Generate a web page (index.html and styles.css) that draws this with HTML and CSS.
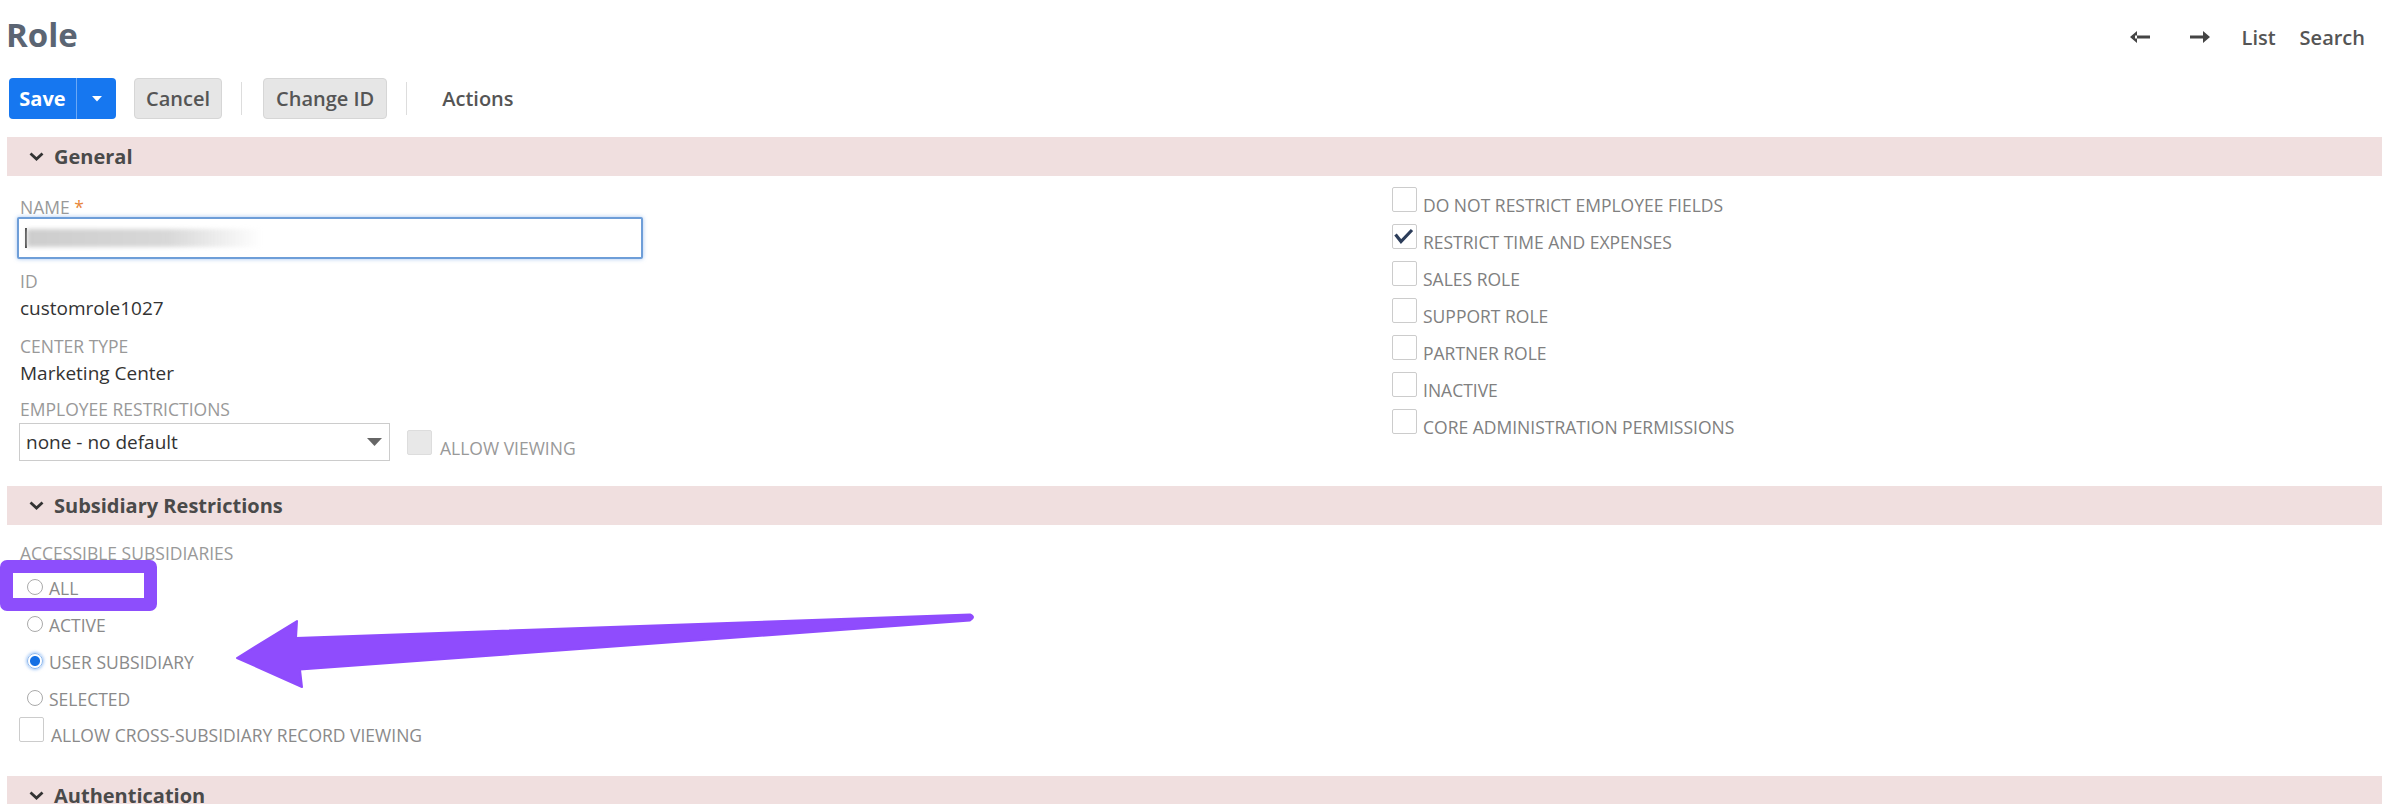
FILE: index.html
```html
<!DOCTYPE html>
<html lang="en">
<head>
    <meta charset="UTF-8">
    <title>Role</title>
    <link rel="stylesheet" href="styles.css">
</head>
<body>
    <header class="top">
        <h1 class="title">Role</h1>
        <nav class="nav">
            <span class="nav-arrow">
                <svg width="22" height="14" viewBox="0 0 22 14"><path d="M8 1 L1 7 L8 13 Z M6 5.5 H21 V8.5 H6 Z" fill="#444"/></svg>
            </span>
            <span class="nav-arrow">
                <svg width="22" height="14" viewBox="0 0 22 14"><path d="M14 1 L21 7 L14 13 Z M1 5.5 H16 V8.5 H1 Z" fill="#444"/></svg>
            </span>
            <span>List</span>
            <span>Search</span>
        </nav>
    </header>

    <div class="toolbar">
        <div class="save-group">
            <button class="btn btn-save">Save</button>
            <button class="btn btn-caret">
                <svg width="10" height="6" viewBox="0 0 10 6"><polygon points="0,0 10,0 5,5.5" fill="#fff"/></svg>
            </button>
        </div>
        <button class="btn btn-grey btn-cancel">Cancel</button>
        <span class="sep"></span>
        <button class="btn btn-grey">Change ID</button>
        <span class="sep"></span>
        <span class="actions">Actions</span>
    </div>

    <section class="section section-general">
        <div class="section-head">
            <svg width="15" height="9" viewBox="0 0 15 9"><path d="M1.5 1.5 L7.5 7 L13.5 1.5" fill="none" stroke="#333" stroke-width="2.8"/></svg>
            General
        </div>
        <div class="general-body">
            <div class="col-left">
                <div class="field">
                    <div class="label">Name <span class="req">*</span></div>
                    <div class="text-input">
                        <span class="cursor"></span>
                        <span class="redacted"></span>
                    </div>
                </div>
                <div class="field field-id">
                    <div class="label">ID</div>
                    <div class="value">customrole1027</div>
                </div>
                <div class="field field-center">
                    <div class="label">Center Type</div>
                    <div class="value">Marketing Center</div>
                </div>
                <div class="field field-emp">
                    <div class="label">Employee Restrictions</div>
                    <div class="select-row">
                        <div class="select">
                            <span>none - no default</span>
                            <svg width="15" height="8" viewBox="0 0 15 8"><polygon points="0,0 15,0 7.5,8" fill="#666"/></svg>
                        </div>
                        <div class="check-row allow-viewing">
                            <span class="cb cb-disabled"></span>
                            <span class="check-text">ALLOW VIEWING</span>
                        </div>
                    </div>
                </div>
            </div>
            <div class="col-right">
                <div class="check-row"><span class="cb"></span><span class="check-text">DO NOT RESTRICT EMPLOYEE FIELDS</span></div>
                <div class="check-row">
                    <span class="cb">
                        <svg width="23" height="23" viewBox="0 0 23 23"><path d="M2.5 9.5 L8 16.5 L19 5" fill="none" stroke="#2c3d5a" stroke-width="3.2"/></svg>
                    </span>
                    <span class="check-text">RESTRICT TIME AND EXPENSES</span>
                </div>
                <div class="check-row"><span class="cb"></span><span class="check-text">SALES ROLE</span></div>
                <div class="check-row"><span class="cb"></span><span class="check-text">SUPPORT ROLE</span></div>
                <div class="check-row"><span class="cb"></span><span class="check-text">PARTNER ROLE</span></div>
                <div class="check-row"><span class="cb"></span><span class="check-text">INACTIVE</span></div>
                <div class="check-row"><span class="cb"></span><span class="check-text">CORE ADMINISTRATION PERMISSIONS</span></div>
            </div>
        </div>
    </section>

    <section class="section">
        <div class="section-head">
            <svg width="15" height="9" viewBox="0 0 15 9"><path d="M1.5 1.5 L7.5 7 L13.5 1.5" fill="none" stroke="#333" stroke-width="2.8"/></svg>
            Subsidiary Restrictions
        </div>
        <div class="subsidiary-body">
            <div class="label">Accessible Subsidiaries</div>
            <div class="radio-list">
                <div class="radio-row"><span class="radio"></span><span class="radio-text">ALL</span></div>
                <div class="radio-row"><span class="radio"></span><span class="radio-text">ACTIVE</span></div>
                <div class="radio-row"><span class="radio radio-on"></span><span class="radio-text">USER SUBSIDIARY</span></div>
                <div class="radio-row"><span class="radio"></span><span class="radio-text">SELECTED</span></div>
            </div>
            <div class="check-row cross-row">
                <span class="cb"></span>
                <span class="check-text">ALLOW CROSS-SUBSIDIARY RECORD VIEWING</span>
            </div>
        </div>
    </section>

    <section class="section">
        <div class="section-head">
            <svg width="15" height="9" viewBox="0 0 15 9"><path d="M1.5 1.5 L7.5 7 L13.5 1.5" fill="none" stroke="#333" stroke-width="2.8"/></svg>
            Authentication
        </div>
    </section>

    <!-- annotation overlay -->
    <div class="highlight"></div>
    <svg class="arrow" width="2382" height="804" viewBox="0 0 2382 804">
        <path d="M237 658 L297 621 L296 638 L970 614.5 Q976 617 970 620.5 L300 669.5 L302 687 Z" fill="#8f4cfd" stroke="#8f4cfd" stroke-width="2" stroke-linejoin="round"/>
    </svg>
</body>
</html>
```

FILE: styles.css
```css
html, body {
    margin: 0;
    padding: 0;
}
body {
    font-family: "Open Sans", "Liberation Sans", sans-serif;
    color: #333;
    background: #fff;
    width: 2382px;
    height: 804px;
    overflow: hidden;
    position: relative;
}

/* header */
.top {
    display: flex;
    justify-content: space-between;
    align-items: center;
    height: 44px;
    padding: 13px 17px 0 6px;
}
.title {
    margin: 0;
    font-size: 33px;
    font-weight: 700;
    line-height: 44px;
    color: #5b6573;
}
.nav {
    display: flex;
    align-items: center;
    gap: 24px;
    padding-top: 4px;
    font-size: 20px;
    font-weight: 600;
    color: #555;
}
.nav-arrow {
    display: flex;
    padding: 0 7px;
}

/* toolbar */
.toolbar {
    display: flex;
    align-items: center;
    height: 41px;
    margin-top: 21px;
    padding-left: 9px;
}
.btn {
    display: flex;
    align-items: center;
    justify-content: center;
    height: 41px;
    box-sizing: border-box;
    margin: 0;
    padding: 0 12px;
    border: none;
    border-radius: 4px;
    font-family: inherit;
    font-size: 20px;
    font-weight: 600;
}
.save-group {
    display: flex;
    height: 41px;
    border-radius: 4px;
    overflow: hidden;
    background: #1677f0;
}
.btn-save {
    width: 68px;
    padding: 0;
    border-radius: 0;
    background: transparent;
    color: #fff;
    font-weight: 700;
    border-right: 1px solid #6aa8f6;
}
.btn-caret {
    width: 39px;
    padding: 0;
    border-radius: 0;
    background: transparent;
}
.btn-grey {
    background: #e6e6e6;
    border: 1px solid #d6d6d6;
    color: #555;
}
.btn-cancel {
    width: 88px;
    margin-left: 18px;
}
.sep {
    width: 1px;
    height: 33px;
    background: #ddd;
    margin: 0 21px 0 19px;
}
.actions {
    padding-left: 14px;
    font-size: 20px;
    font-weight: 600;
    color: #555;
}

/* sections */
.section-general {
    margin-top: 18px;
}
.section-head {
    display: flex;
    align-items: center;
    height: 39px;
    margin-left: 7px;
    padding-left: 22px;
    background: #f0dfdf;
    font-size: 20px;
    font-weight: 700;
    color: #4a4a4a;
}
.section-head svg {
    margin-right: 10px;
}

.general-body {
    display: grid;
    grid-template-columns: 1375px 1fr;
    padding: 0 0 25px 17px;
}
.col-left {
    padding-top: 21px;
}
.col-right {
    display: flex;
    flex-direction: column;
    gap: 12px;
    padding-top: 11px;
}

.label {
    padding-left: 3px;
    font-size: 17.5px;
    line-height: 20px;
    color: #999;
    text-transform: uppercase;
}
.req {
    color: #e8863a;
}
.value {
    margin-top: 6px;
    padding-left: 3px;
    font-size: 19px;
    line-height: 22px;
    color: #333;
}
.field-id {
    margin-top: 12px;
}
.field-center {
    margin-top: 17px;
}
.field-emp {
    margin-top: 15px;
}

.text-input {
    display: flex;
    align-items: center;
    width: 626px;
    height: 42px;
    box-sizing: border-box;
    padding-left: 6px;
    border: 2px solid #6e9ed8;
    border-radius: 2px;
    box-shadow: 0 0 4px rgba(90, 150, 225, 0.55);
    background: #fff;
}
.cursor {
    width: 2px;
    height: 20px;
    background: #444;
}
.redacted {
    width: 235px;
    height: 18px;
    background: linear-gradient(90deg, #cdcdcd, #d8d8d8 60%, rgba(230, 230, 230, 0));
    filter: blur(2px);
}

.select-row {
    display: flex;
    align-items: flex-end;
    margin-top: 4px;
}
.select {
    display: flex;
    align-items: center;
    justify-content: space-between;
    width: 371px;
    height: 38px;
    box-sizing: border-box;
    margin-left: 2px;
    padding: 0 7px 0 6px;
    border: 1px solid #ccc;
    font-size: 19px;
    color: #333;
}

.check-row {
    display: flex;
    align-items: flex-end;
}
.cb {
    display: flex;
    flex: none;
    width: 25px;
    height: 25px;
    box-sizing: border-box;
    border: 1px solid #ccc;
    border-radius: 2px;
    background: #fff;
}
.cb-disabled {
    background: #e8e8e8;
    border-color: #ddd;
}
.check-text {
    margin: 0 0 -3px 6px;
    font-size: 17.5px;
    line-height: 20px;
    color: #808080;
}
.allow-viewing {
    margin: 0 0 6px 17px;
}
.allow-viewing .check-text {
    margin-left: 8px;
    color: #999;
}

/* subsidiary */
.subsidiary-body {
    padding: 18px 0 34px 17px;
}
.radio-list {
    margin-top: 5px;
}
.radio-row {
    display: flex;
    align-items: center;
    height: 37px;
}
.radio {
    width: 16px;
    height: 16px;
    box-sizing: border-box;
    margin-left: 10px;
    border: 1px solid #aaa;
    border-radius: 50%;
    background: #fff;
}
.radio-on {
    border-color: #8fb9ee;
    background: radial-gradient(circle, #1570e4 0 4.5px, #fff 5.5px);
    box-shadow: 0 0 3px 1px rgba(80, 150, 240, 0.5);
}
.radio-text {
    position: relative;
    top: 1px;
    margin-left: 6px;
    font-size: 17.5px;
    line-height: 20px;
    color: #8a8a8a;
}
.cross-row {
    margin-top: 1px;
}
.cross-row .cb {
    margin-left: 2px;
}
.cross-row .check-text {
    margin-left: 7px;
    color: #8a8a8a;
}

/* annotation */
.highlight {
    position: absolute;
    left: 0;
    top: 560px;
    width: 157px;
    height: 51px;
    box-sizing: border-box;
    border: 13px solid #8d4efc;
    border-radius: 7px;
}
.arrow {
    position: absolute;
    left: 0;
    top: 0;
    pointer-events: none;
}
```
